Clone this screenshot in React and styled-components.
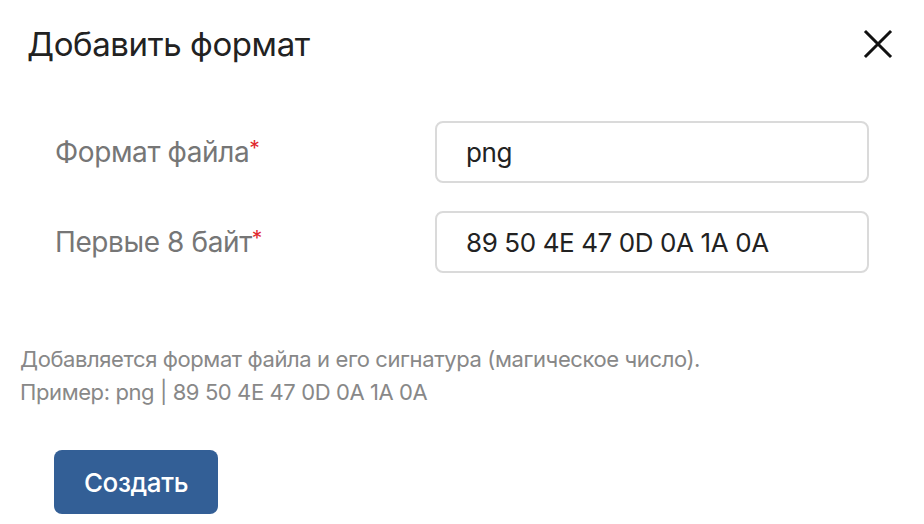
import React from 'react'
import styled, { createGlobalStyle } from 'styled-components'

const GlobalStyle = createGlobalStyle`
	* {
		box-sizing: border-box;
	}

	body {
		margin: 0;
		background: #ffffff;
		font-family: Inter, Roboto, 'Liberation Sans', sans-serif;
		letter-spacing: -0.025em;
	}
`

const fields = [
	{ label: 'Формат файла', value: 'png' },
	{ label: 'Первые 8 байт', value: '89 50 4E 47 0D 0A 1A 0A' },
]

const App = () => {
	return (
		<>
			<GlobalStyle />
			<StyledModal>
				<Header>
					<Title>Добавить формат</Title>
					<CloseButton aria-label='Закрыть'>
						<svg width='30' height='30' viewBox='0 0 30 30'>
							<path
								d='M3 3 L27 27 M27 3 L3 27'
								stroke='#111'
								strokeWidth='3'
								strokeLinecap='square'
							/>
						</svg>
					</CloseButton>
				</Header>

				<Form>
					{fields.map((field) => (
						<Row key={field.label}>
							<Label>
								{field.label}
								<Required>*</Required>
							</Label>
							<Input defaultValue={field.value} />
						</Row>
					))}
				</Form>

				<Hint>
					Добавляется формат файла и его сигнатура (магическое число).
					<br />
					Пример: png | 89 50 4E 47 0D 0A 1A 0A
				</Hint>

				<SubmitButton>Создать</SubmitButton>
			</StyledModal>
		</>
	)
}

const StyledModal = styled.div`
	width: 924px;
	height: 524px;
	padding: 0 20px;
	display: flex;
	flex-direction: column;
`

const Header = styled.div`
	display: flex;
	align-items: center;
	justify-content: space-between;
	height: 88px;
	padding: 0 11px 0 7px;
`

const Title = styled.h2`
	margin: 0;
	font-size: 33px;
	font-weight: 400;
	color: #222;
`

const CloseButton = styled.button`
	display: flex;
	padding: 0;
	border: none;
	background: none;
	cursor: pointer;
`

const Form = styled.div`
	display: flex;
	flex-direction: column;
	gap: 28px;
	margin-top: 33px;
	padding-left: 35px;
`

const Row = styled.div`
	display: flex;
	align-items: center;
`

const Label = styled.label`
	width: 380px;
	font-size: 28px;
	color: #767676;
`

const Required = styled.span`
	color: #e0282e;
	font-size: 0.75em;
	vertical-align: 0.3em;
`

const Input = styled.input`
	width: 434px;
	height: 62px;
	padding: 0 29px;
	border: 2px solid #dadada;
	border-radius: 8px;
	font-family: inherit;
	font-size: 26px;
	letter-spacing: inherit;
	color: #222;
	outline: none;
`

const Hint = styled.p`
	margin: 70px 0 0;
	font-size: 22px;
	line-height: 33px;
	color: #888;
`

const SubmitButton = styled.button`
	align-self: flex-start;
	width: 164px;
	height: 64px;
	margin: 41px 0 0 34px;
	border: none;
	border-radius: 8px;
	background: #335f96;
	font-family: inherit;
	font-size: 26px;
	font-weight: 500;
	letter-spacing: inherit;
	color: #fff;
	cursor: pointer;
`

export default App
